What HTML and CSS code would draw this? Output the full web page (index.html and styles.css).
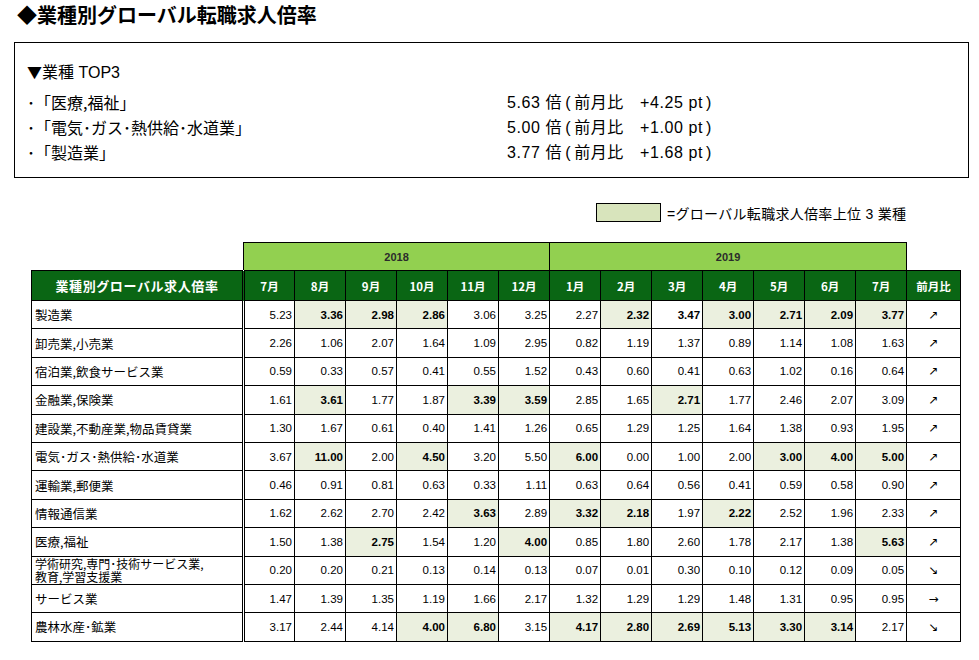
FILE: index.html
```html
<!DOCTYPE html>
<html lang="ja">
<head>
<meta charset="utf-8">
<title>業種別グローバル転職求人倍率</title>
<link rel="stylesheet" href="styles.css">
</head>
<body>
<h1 class="title">◆業種別グローバル転職求人倍率</h1>

<section class="top-box">
  <div class="top-head"><span class="tri">▼</span>業種 TOP3</div>
  <div class="top-row"><span class="top-name">･「医療,福祉」</span><span class="top-val">5.63 倍<span class="paren">(</span>前月比<span class="gap"></span>+4.25 pt<span class="paren">)</span></span></div>
  <div class="top-row"><span class="top-name">･「電気･ガス･熱供給･水道業」</span><span class="top-val">5.00 倍<span class="paren">(</span>前月比<span class="gap"></span>+1.00 pt<span class="paren">)</span></span></div>
  <div class="top-row"><span class="top-name">･「製造業」</span><span class="top-val">3.77 倍<span class="paren">(</span>前月比<span class="gap"></span>+1.68 pt<span class="paren">)</span></span></div>
</section>

<div class="legend">
  <span class="legend-box"></span>
  <span class="legend-text">=グローバル転職求人倍率上位 3 業種</span>
</div>

<table class="grid">
  <colgroup>
    <col class="c-label">
    <col class="c-m"><col class="c-m"><col class="c-m"><col class="c-m"><col class="c-m"><col class="c-m">
    <col class="c-m"><col class="c-m"><col class="c-m"><col class="c-m"><col class="c-m"><col class="c-m"><col class="c-m">
    <col class="c-arrow">
  </colgroup>
  <thead>
    <tr class="year-row">
      <th class="blank"></th>
      <th colspan="6" class="year">2018</th>
      <th colspan="7" class="year">2019</th>
      <th class="blank"></th>
    </tr>
    <tr class="month-row">
      <th class="label-head">業種別グローバル求人倍率</th>
      <th>7月</th><th>8月</th><th>9月</th><th>10月</th><th>11月</th><th>12月</th>
      <th>1月</th><th>2月</th><th>3月</th><th>4月</th><th>5月</th><th>6月</th><th>7月</th>
      <th>前月比</th>
    </tr>
  </thead>
  <tbody>
    <tr>
      <td class="label">製造業</td>
      <td>5.23</td><td class="hi">3.36</td><td class="hi">2.98</td><td class="hi">2.86</td><td>3.06</td><td>3.25</td>
      <td>2.27</td><td class="hi">2.32</td><td class="b">3.47</td><td class="hi">3.00</td><td class="hi">2.71</td><td class="hi">2.09</td><td class="hi">3.77</td>
      <td class="arrow">↗</td>
    </tr>
    <tr>
      <td class="label">卸売業,小売業</td>
      <td>2.26</td><td>1.06</td><td>2.07</td><td>1.64</td><td>1.09</td><td>2.95</td>
      <td>0.82</td><td>1.19</td><td>1.37</td><td>0.89</td><td>1.14</td><td>1.08</td><td>1.63</td>
      <td class="arrow">↗</td>
    </tr>
    <tr>
      <td class="label">宿泊業,飲食サービス業</td>
      <td>0.59</td><td>0.33</td><td>0.57</td><td>0.41</td><td>0.55</td><td>1.52</td>
      <td>0.43</td><td>0.60</td><td>0.41</td><td>0.63</td><td>1.02</td><td>0.16</td><td>0.64</td>
      <td class="arrow">↗</td>
    </tr>
    <tr>
      <td class="label">金融業,保険業</td>
      <td>1.61</td><td class="hi">3.61</td><td>1.77</td><td>1.87</td><td class="hi">3.39</td><td class="hi">3.59</td>
      <td>2.85</td><td>1.65</td><td class="hi">2.71</td><td>1.77</td><td>2.46</td><td>2.07</td><td>3.09</td>
      <td class="arrow">↗</td>
    </tr>
    <tr>
      <td class="label">建設業,不動産業,物品賃貸業</td>
      <td>1.30</td><td>1.67</td><td>0.61</td><td>0.40</td><td>1.41</td><td>1.26</td>
      <td>0.65</td><td>1.29</td><td>1.25</td><td>1.64</td><td>1.38</td><td>0.93</td><td>1.95</td>
      <td class="arrow">↗</td>
    </tr>
    <tr>
      <td class="label">電気･ガス･熱供給･水道業</td>
      <td>3.67</td><td class="hi">11.00</td><td>2.00</td><td class="hi">4.50</td><td>3.20</td><td>5.50</td>
      <td class="hi">6.00</td><td>0.00</td><td>1.00</td><td>2.00</td><td class="hi">3.00</td><td class="hi">4.00</td><td class="hi">5.00</td>
      <td class="arrow">↗</td>
    </tr>
    <tr>
      <td class="label">運輸業,郵便業</td>
      <td>0.46</td><td>0.91</td><td>0.81</td><td>0.63</td><td>0.33</td><td>1.11</td>
      <td>0.63</td><td>0.64</td><td>0.56</td><td>0.41</td><td>0.59</td><td>0.58</td><td>0.90</td>
      <td class="arrow">↗</td>
    </tr>
    <tr>
      <td class="label">情報通信業</td>
      <td>1.62</td><td>2.62</td><td>2.70</td><td>2.42</td><td class="hi">3.63</td><td>2.89</td>
      <td class="hi">3.32</td><td class="hi">2.18</td><td>1.97</td><td class="hi">2.22</td><td>2.52</td><td>1.96</td><td>2.33</td>
      <td class="arrow">↗</td>
    </tr>
    <tr>
      <td class="label">医療,福祉</td>
      <td>1.50</td><td>1.38</td><td class="hi">2.75</td><td>1.54</td><td>1.20</td><td class="hi">4.00</td>
      <td>0.85</td><td>1.80</td><td>2.60</td><td>1.78</td><td>2.17</td><td>1.38</td><td class="hi">5.63</td>
      <td class="arrow">↗</td>
    </tr>
    <tr>
      <td class="label two"><div class="two-lines"><span class="ln">学術研究,専門･技術サービス業,</span><span class="ln">教育,学習支援業</span></div></td>
      <td>0.20</td><td>0.20</td><td>0.21</td><td>0.13</td><td>0.14</td><td>0.13</td>
      <td>0.07</td><td>0.01</td><td>0.30</td><td>0.10</td><td>0.12</td><td>0.09</td><td>0.05</td>
      <td class="arrow">↘</td>
    </tr>
    <tr>
      <td class="label">サービス業</td>
      <td>1.47</td><td>1.39</td><td>1.35</td><td>1.19</td><td>1.66</td><td>2.17</td>
      <td>1.32</td><td>1.29</td><td>1.29</td><td>1.48</td><td>1.31</td><td>0.95</td><td>0.95</td>
      <td class="arrow">→</td>
    </tr>
    <tr>
      <td class="label">農林水産･鉱業</td>
      <td>3.17</td><td>2.44</td><td>4.14</td><td class="hi">4.00</td><td class="hi">6.80</td><td>3.15</td>
      <td class="hi">4.17</td><td class="hi">2.80</td><td class="hi">2.69</td><td class="hi">5.13</td><td class="hi">3.30</td><td class="hi">3.14</td><td>2.17</td>
      <td class="arrow">↘</td>
    </tr>
  </tbody>
</table>
</body>
</html>
```

FILE: styles.css
```css
* { box-sizing: border-box; }

body {
  margin: 0;
  background: #fff;
  color: #000;
  font-family: "Liberation Sans", "Noto Sans CJK JP", sans-serif;
}

.title {
  margin: 0;
  padding-left: 17px;
  height: 30px;
  line-height: 30px;
  font-size: 20px;
  font-weight: bold;
  font-family: "Noto Sans CJK JP", sans-serif;
}

.top-box {
  margin: 12px 10px 0 14px;
  width: 955px;
  height: 136px;
  border: 1px solid #000;
  padding: 16px 0 0 12px;
  font-size: 16px;
}

.top-head {
  height: 25px;
  line-height: 25px;
  margin-bottom: 6px;
  font-family: "Liberation Sans", "Noto Sans CJK JP", sans-serif;
}

.tri {
  font-family: "Noto Sans CJK JP", sans-serif;
  font-size: 15px;
}

.top-row {
  display: flex;
  height: 25px;
  line-height: 25px;
}

.top-name {
  width: 480px;
  font-family: "Noto Sans CJK JP", sans-serif;
}

.top-val {
  display: flex;
  align-items: baseline;
  font-family: "Liberation Sans", "Noto Sans CJK JP", sans-serif;
  letter-spacing: 0.6px;
}

.paren {
  padding: 0 3px;
}

.gap {
  display: inline-block;
  width: 16px;
}

.legend {
  display: flex;
  align-items: center;
  margin: 25px 0 0 596px;
  height: 19px;
}

.legend-box {
  width: 65px;
  height: 19px;
  background: #d8e4bc;
  border: 1px solid #000;
}

.legend-text {
  margin-left: 6px;
  font-size: 14px;
  letter-spacing: 0.3px;
  font-family: "Liberation Sans", "Noto Sans CJK JP", sans-serif;
}

.grid {
  margin: 20px 0 0 31px;
  border-collapse: collapse;
  table-layout: fixed;
  width: 929px;
  font-size: 11.5px;
}

.c-label { width: 212px; }
.c-m { width: 51px; }
.c-arrow { width: 54px; }

.grid th,
.grid td {
  border: 1px solid #000;
  padding: 0;
}

.year-row th {
  height: 28px;
}

.grid th.blank {
  border: none;
  background: transparent;
}

.grid th.year {
  background: #92d050;
  color: #2b2b2b;
  font-weight: bold;
  font-size: 11px;
  text-align: center;
}

.month-row th {
  height: 30px;
  background: #0a6614;
  color: #fff;
  font-weight: bold;
  font-size: 11.5px;
  text-align: center;
  font-family: "Noto Sans CJK JP", sans-serif;
}

.grid .month-row th.label-head {
  font-size: 13px;
  letter-spacing: 0.6px;
  border-right: 3px double #000;
}

.grid tbody td {
  height: 28.4px;
  text-align: right;
  padding-right: 2px;
  vertical-align: middle;
}

.grid td.label {
  text-align: left;
  padding-left: 3px;
  font-size: 12.5px;
  font-family: "Noto Sans CJK JP", sans-serif;
  border-right: 3px double #000;
  white-space: nowrap;
}

.grid td.label.two {
  vertical-align: top;
  font-size: 12px;
}

.two-lines {
  display: flex;
  flex-direction: column;
  height: 27px;
}

.ln {
  height: 13.5px;
  line-height: 13.5px;
}

.grid td.hi {
  background: #ebf0df;
  font-weight: bold;
}

.grid td.b {
  font-weight: bold;
}

.grid td.arrow {
  text-align: center;
  padding-right: 0;
  font-size: 12px;
  font-family: "DejaVu Sans", sans-serif;
}
```
